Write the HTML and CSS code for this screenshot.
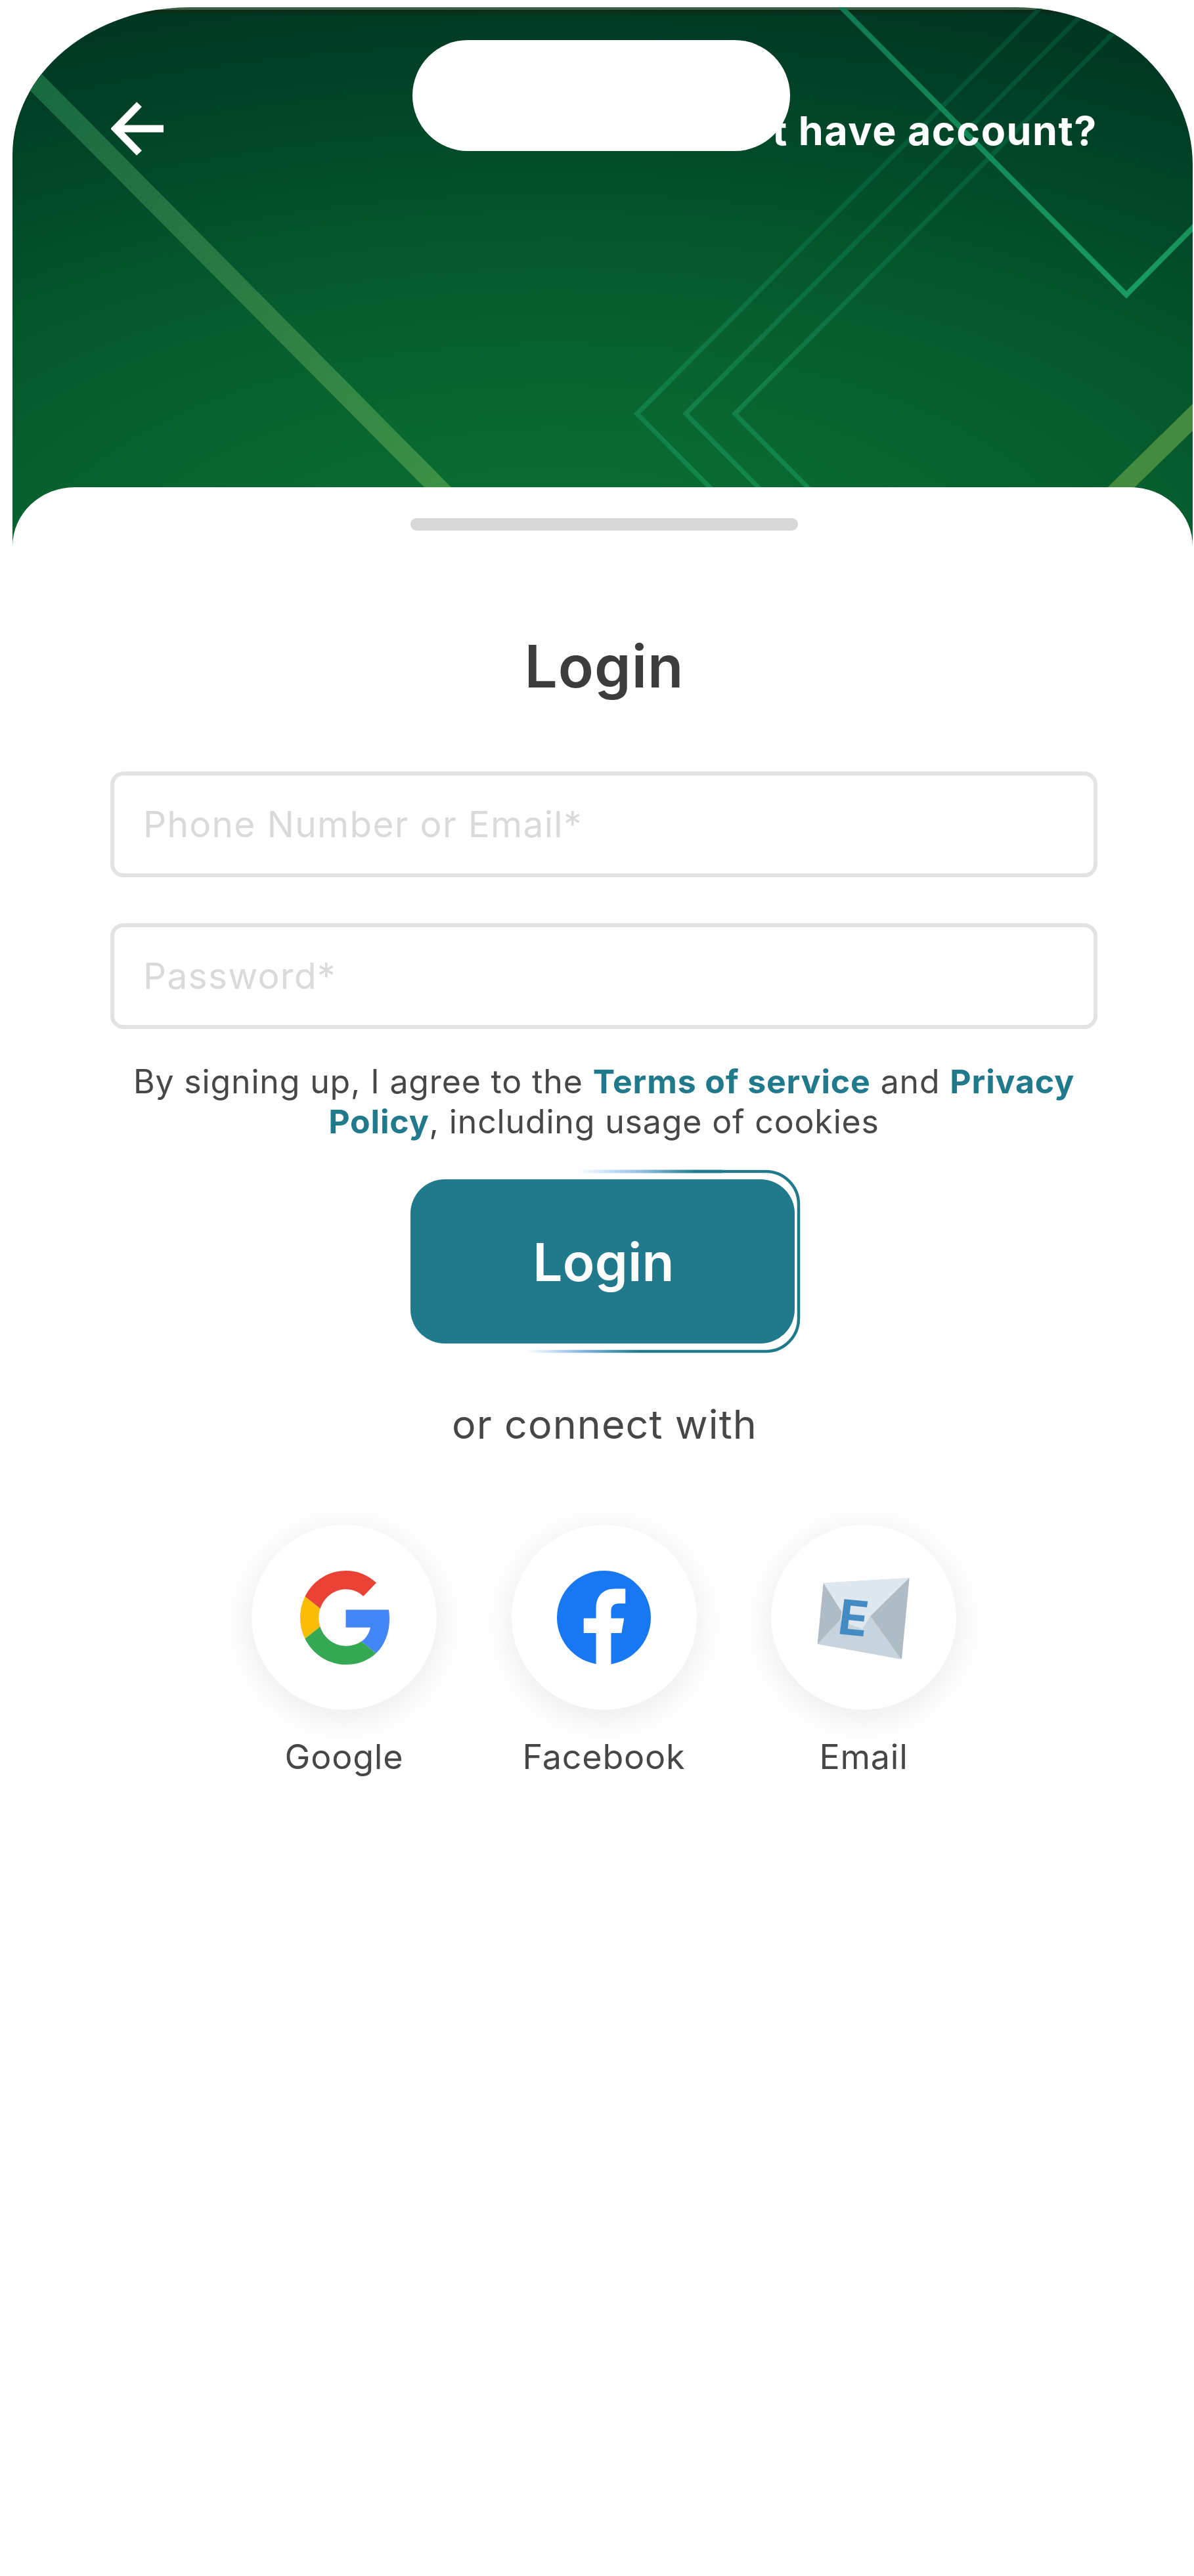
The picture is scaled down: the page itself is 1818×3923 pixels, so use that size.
FILE: index.html
```html
<!DOCTYPE html>
<html lang="en">
<head>
<meta charset="utf-8">
<title>Login</title>
<link rel="stylesheet" href="styles.css">
</head>
<body>
<main class="phone">
  <svg class="hero" viewBox="19 11 1797 830" preserveAspectRatio="none" aria-hidden="true">
    <defs>
      <linearGradient id="band" gradientUnits="userSpaceOnUse" x1="50" y1="110" x2="670" y2="742">
        <stop offset="0" stop-color="#176a40"/><stop offset=".35" stop-color="#267443"/><stop offset="1" stop-color="#3b9145"/>
      </linearGradient>
      <linearGradient id="bright" gradientUnits="userSpaceOnUse" x1="0" y1="11" x2="0" y2="449">
        <stop offset="0" stop-color="#107a50"/><stop offset="1" stop-color="#189b62"/>
      </linearGradient>
      <linearGradient id="thin" gradientUnits="userSpaceOnUse" x1="0" y1="11" x2="0" y2="742">
        <stop offset="0" stop-color="#034a30"/><stop offset=".4" stop-color="#06633a"/><stop offset=".8" stop-color="#127e46"/><stop offset="1" stop-color="#11884a"/>
      </linearGradient>
    </defs>
    <polygon points="20,68 63,112 687,742 717,772 676,772 646,742 46,138 20,112" fill="url(#band)"/>
    <polygon points="1816,615 1816,656 1697,772 1656,772" fill="#458b3f"/>
    <g fill="none" stroke="url(#thin)" stroke-width="7">
      <path d="M1590 6 970 630 1110 772"/>
      <path d="M1664 6 1044 630 1184 772"/>
      <path d="M1739 6 1119 630 1259 772"/>
    </g>
    <path d="M1276 6 1715 449 1822 341" fill="none" stroke="url(#bright)" stroke-width="8"/>
  </svg>
  <div class="island"></div>
  <header class="topbar">
    <svg class="back" viewBox="0 0 80 82" aria-label="Back"><path d="M80 41H8M43 4 7 41l36 37" fill="none" stroke="#fff" stroke-width="11"/></svg>
    <span class="no-account">Don't have account?</span>
  </header>
  <section class="sheet">
    <div class="handle"></div>
    <h1 class="title">Login</h1>
    <div class="field">Phone Number or Email*</div>
    <div class="field">Password*</div>
    <p class="terms">By signing up, I agree to the <b>Terms of service</b> and <b>Privacy</b><br><b>Policy</b>, including usage of cookies</p>
    <div class="cta">
      <button class="login">Login</button>
      <svg class="trace" viewBox="0 0 420 280" aria-hidden="true">
        <defs><linearGradient id="fade" x1="0" x2="1"><stop offset="0" stop-color="#8bbdf5" stop-opacity="0"/><stop offset=".22" stop-color="#7fb2dc"/><stop offset=".42" stop-color="#207a8c"/></linearGradient>
        <linearGradient id="fadeTop" gradientUnits="userSpaceOnUse" x1="80" y1="0" x2="260" y2="0"><stop offset="0" stop-color="#8bbdf5" stop-opacity="0"/><stop offset=".55" stop-color="#8fbfe0"/><stop offset="1" stop-color="#207a8c"/></linearGradient></defs>
        <path d="M80 3H300" fill="none" stroke="url(#fadeTop)" stroke-width="5"/>
        <path d="M299 3H367a50 50 0 0 1 50 50V227a50 50 0 0 1-50 50H0" fill="none" stroke="url(#fade)" stroke-width="4.5"/>
      </svg>
    </div>
    <p class="or">or connect with</p>
    <div class="socials">
      <div class="social">
        <div class="disc"><svg class="google" width="139" height="143" viewBox="0 0 48 48" preserveAspectRatio="none">
          <path fill="#EA4335" d="M24 9.5c3.54 0 6.71 1.22 9.21 3.6l6.85-6.85C35.9 2.38 30.47 0 24 0 14.62 0 6.51 5.38 2.56 13.22l7.98 6.19C12.43 13.72 17.74 9.5 24 9.5z"/>
          <path fill="#4285F4" d="M46.98 24.55c0-1.57-.15-3.09-.38-4.55H24v9.02h12.94c-.58 2.96-2.26 5.48-4.78 7.18l7.73 6c4.51-4.18 7.09-10.36 7.09-17.65z"/>
          <path fill="#FBBC05" d="M10.53 28.59c-.48-1.45-.76-2.99-.76-4.59s.27-3.14.76-4.59l-7.98-6.19C.92 16.46 0 20.12 0 24c0 3.88.92 7.54 2.56 10.78l7.97-6.19z"/>
          <path fill="#34A853" d="M24 48c6.48 0 11.93-2.13 15.89-5.81l-7.73-6c-2.15 1.45-4.92 2.3-8.16 2.3-6.26 0-11.57-4.22-13.47-9.91l-7.98 6.19C6.51 42.62 14.62 48 24 48z"/>
        </svg></div>
        <span class="name">Google</span>
      </div>
      <div class="social">
        <div class="disc"><svg width="143" height="143" viewBox="0 0 144 146" preserveAspectRatio="none">
          <ellipse cx="72" cy="73" rx="72" ry="73" fill="#1877F2"/>
          <path fill="#fff" d="M60 146V97H41V74h19V58c0-19 11-30 29-30h16v23H95c-9 0-12 5-12 12v11h20l-4 23H83v49z"/>
        </svg></div>
        <span class="name">Facebook</span>
      </div>
      <div class="social">
        <div class="disc"><svg class="mail" width="142" height="126" viewBox="193 183 426 378">
          <path d="M222 210 615 187 580 555 195 487z" fill="#afbcc5"/>
          <path d="M222 209 615 185 437 360 305 340z" fill="#dfe8ef"/>
          <path d="M195 488 305 370 437 360 578 558z" fill="#c8d4dd"/>
          <path d="M305 340 437 360 400 420 300 380z" fill="#dfe8ef"/>
          <text class="stamp" transform="matrix(1 .1 -.13 1 282 441)">E</text>
        </svg></div>
        <span class="name">Email</span>
      </div>
    </div>
  </section>
</main>
</body>
</html>
```
FILE: styles.css
```css
* { box-sizing: border-box; }
body { margin: 0; background: #fff; font-family: Inter, sans-serif; color: #474747; }
h1, p { margin: 0; }
.phone { position: relative; width: 1797px; height: 3900px; margin: 11px 0 0 19px; }
.hero {
  position: absolute; inset: 0 0 auto; width: 1797px; height: 830px;
  border-radius: 270px 270px 0 0 / 225px 240px 0 0;
  background:
    linear-gradient(rgba(110,130,100,.55) 0 4px, rgba(20,35,15,.5) 4px 8px, transparent 12px),
    radial-gradient(ellipse 2100px 980px at 46% 108%, #0b7235 0, #08632f 38%, #04552c 59%, #014628 76%, #003c25 88%, #003320 100%);
}
.island { position: absolute; left: 609px; top: 50px; width: 575px; height: 169px; border-radius: 85px; background: #fff; z-index: 2; }
.topbar { position: relative; display: flex; justify-content: space-between; height: 731px; padding: 144px 145px 0 150px; }
.back { width: 80px; height: 82px; }
.no-account { font-size: 61px; line-height: 88px; font-weight: 700; letter-spacing: 1.5px; color: #fff; white-space: nowrap; }
.sheet { position: relative; height: 3150px; border-radius: 95px 95px 0 0 / 90px 90px 0 0; background: #fff; padding: 47px 145px 0 149px; display: flex; flex-direction: column; align-items: center; }
.handle { width: 590px; height: 19px; border-radius: 10px; background: #d8d8d8; }
.title { margin-top: 147px; font-size: 89px; line-height: 120px; font-weight: 600; letter-spacing: 1px; padding-left: 1px; color: #3c3c3c; }
.field { width: 1503px; height: 161px; border: 6px solid #e3e3e3; border-radius: 20px; padding-left: 44px; font-size: 55px; line-height: 149px; font-weight: 400; letter-spacing: 1.3px; color: #dadada; }
.title + .field { margin-top: 100px; }
.field + .field { margin-top: 70px; }
.terms { margin-top: 50px; font-size: 50px; line-height: 61px; letter-spacing: .85px; text-align: center; white-space: nowrap; }
.terms b { color: #207a8c; font-weight: 700; }
.cta { position: relative; width: 590px; margin-top: 57px; }
.login { display: block; width: 585px; height: 250px; border: 0; border-radius: 52px; background: #207a8c; color: #fff; font: 600 80px/252px Inter, sans-serif; letter-spacing: .3px; padding: 0 0 0 4px; }
.trace { position: absolute; left: 174px; top: -15px; width: 420px; height: 280px; }
.or { margin-top: 78px; font-size: 61px; line-height: 90px; letter-spacing: 1.1px; padding-left: 2px; }
.socials { display: flex; gap: 113.5px; margin-top: 108px; }
.social { width: 282px; display: flex; flex-direction: column; align-items: center; }
.disc { width: 282px; height: 282px; border-radius: 50%; background: #fff; box-shadow: 0 10px 60px rgba(0,0,0,.09); display: grid; place-items: center; }
.google { margin-left: 4px; }
.mail { margin-top: 4px; }
.name { margin-top: 42px; font-size: 52px; line-height: 60px; letter-spacing: .8px; }
.stamp { font: 700 220px Inter, sans-serif; letter-spacing: 0; fill: #428bc3; }
```
